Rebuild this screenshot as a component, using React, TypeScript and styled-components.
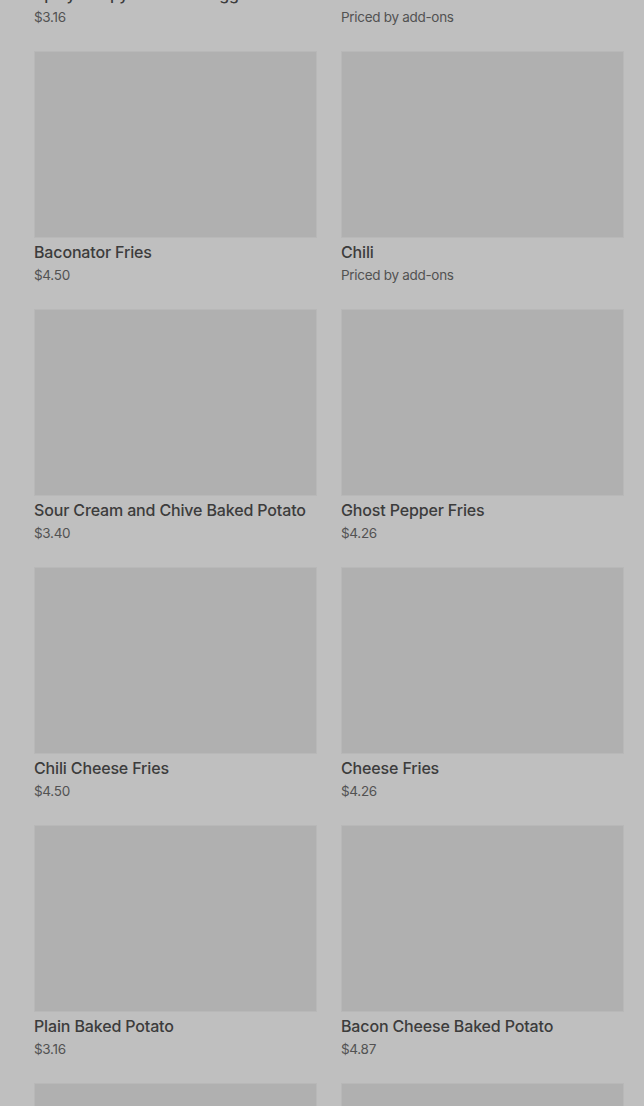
import React from "react";
import styled, { createGlobalStyle } from "styled-components";

interface MenuItem {
  name?: string;
  price?: string;
}

const items: MenuItem[] = [
  { name: "Spicy Crispy Chicken Nuggets", price: "$3.16" },
  { name: "Chili Small", price: "Priced by add-ons" },
  { name: "Baconator Fries", price: "$4.50" },
  { name: "Chili", price: "Priced by add-ons" },
  { name: "Sour Cream and Chive Baked Potato", price: "$3.40" },
  { name: "Ghost Pepper Fries", price: "$4.26" },
  { name: "Chili Cheese Fries", price: "$4.50" },
  { name: "Cheese Fries", price: "$4.26" },
  { name: "Plain Baked Potato", price: "$3.16" },
  { name: "Bacon Cheese Baked Potato", price: "$4.87" },
  {},
  {},
];

const GlobalStyle = createGlobalStyle`
  html, body {
    margin: 0;
    padding: 0;
    background: #bfbfbf;
    overflow: hidden;
  }
  body {
    font-family: Inter, "Noto Sans", sans-serif;
  }
`;

export default function App() {
  return (
    <>
      <GlobalStyle />
      <Page>
        <Grid>
          {items.map((item, i) => (
            <Card key={i}>
              <Photo />
              {item.name && <Name>{item.name}</Name>}
              {item.price && <Price>{item.price}</Price>}
            </Card>
          ))}
        </Grid>
      </Page>
    </>
  );
}

const Page = styled.div`
  width: 644px;
  height: 1106px;
  overflow: hidden;
  background: #bfbfbf;
`;

const Grid = styled.div`
  margin-top: -207px;
  padding: 0 20px 0 34px;
  display: grid;
  grid-template-columns: 283px 283px;
  column-gap: 24px;
  row-gap: 24px;
`;

const Card = styled.div`
  display: flex;
  flex-direction: column;
`;

const Photo = styled.div`
  height: 187px;
  background: #b0b0b0;
  box-shadow: inset 0 0 0 1px #b8b8b8;
`;

const Name = styled.div`
  margin-top: 4px;
  font-size: 16px;
  line-height: 20px;
  font-weight: 500;
  color: #3c3c3c;
  letter-spacing: -0.15px;
  white-space: nowrap;
`;

const Price = styled.div`
  margin-top: 3px;
  font-size: 13.5px;
  line-height: 20px;
  color: #525252;
  letter-spacing: -0.3px;
`;
